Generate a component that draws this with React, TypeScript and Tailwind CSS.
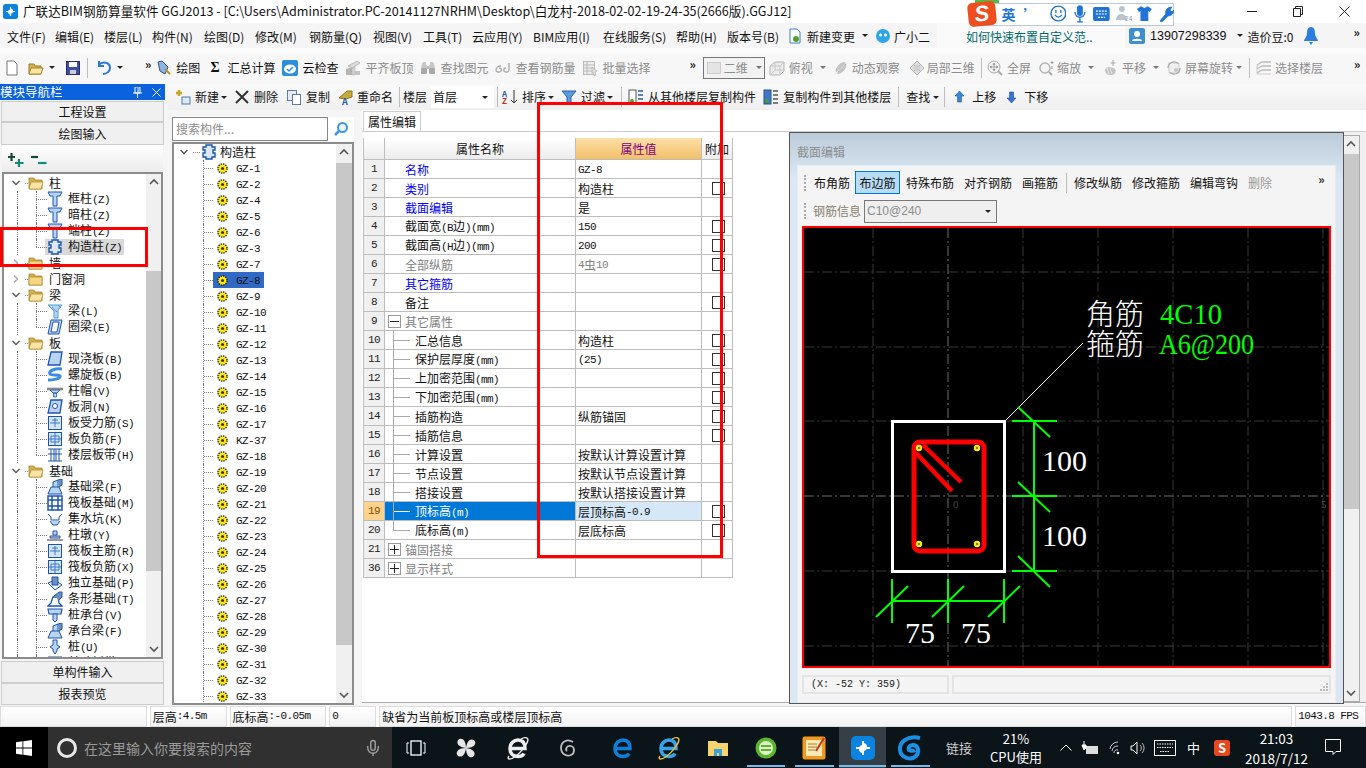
import type { ReactNode } from "react";
import { Mic } from "lucide-react";

const mono = "font-['Liberation_Mono','DejaVu_Sans_Mono',monospace]";

// CJK text at 12px, latin squeezed to 6px per char like the old bitmap font
function Mix({ text }: { text: string }) {
  return (
    <>
      {text.split(/([\x00-\x7f]+)/).map((part, i) =>
        /^[\x00-\x7f]+$/.test(part) ? (
          <span key={i} className={`${mono} text-[11px] tracking-[-0.6px]`}>
            {part}
          </span>
        ) : (
          <span key={i}>{part}</span>
        ),
      )}
    </>
  );
}

function Ico({ children, w = 16, h = 16 }: { children: ReactNode; w?: number; h?: number }) {
  return (
    <svg width={w} height={h} viewBox={`0 0 ${w} ${h}`} className="shrink-0">
      {children}
    </svg>
  );
}

function Caret({ className = "" }: { className?: string }) {
  return (
    <span
      className={`inline-block h-0 w-0 shrink-0 border-x-[3px] border-t-[3px] border-x-transparent border-t-[#222] ${className}`}
    />
  );
}

function Sep({ className = "" }: { className?: string }) {
  return <span className={`h-5 w-px shrink-0 bg-[#bdbdbd] ${className}`} />;
}

function Tool({
  icon,
  label,
  gray,
  gap = "gap-[4px]",
  className = "",
}: {
  icon?: ReactNode;
  label: string;
  gray?: boolean;
  gap?: string;
  className?: string;
}) {
  return (
    <span className={`flex shrink-0 items-center ${gap} ${className}`}>
      {icon}
      <span className={gray ? "text-[#8c8c8c]" : "text-[#111]"}>{label}</span>
    </span>
  );
}

/* disabled toolbar drawings */
const gAlign = (
  <Ico>
    <path d="M1 15V9l6-2v8z" fill="#b5b5b5" />
    <path d="M7 15V6h3v9z" fill="#d2d2d2" stroke="#aaa" strokeWidth="0.5" />
    <path d="M3 6l9-5 3 2-8 5z" fill="#dcdcdc" stroke="#aaa" strokeWidth="0.7" />
    <path d="M10 15v-4h5v4z" fill="#c4c4c4" />
  </Ico>
);
const gBinoc = (
  <Ico>
    <path d="M3 2h3v3h1v3H1l1-4zM10 2h3l1 2 1 4H9V5h1z" fill="#c8c8c8" />
    <rect x="1" y="8" width="6" height="6" rx="1" fill="#a8a8a8" />
    <rect x="9" y="8" width="6" height="6" rx="1" fill="#a8a8a8" />
    <rect x="7" y="6" width="2" height="3" fill="#bbb" />
  </Ico>
);
const gGlasses = (
  <Ico>
    <path d="M6 6C3 6 1 8 1 10c0 2 3 3 5 1 1-1 0-3-2-3" fill="none" stroke="#aaa" strokeWidth="1.3" />
    <path d="M14 3v7c0 2-3 3-5 1-1-1 0-3 2-3" fill="none" stroke="#aaa" strokeWidth="1.3" />
  </Ico>
);
const gList = (
  <Ico>
    <rect x="1.5" y="1.5" width="11" height="13" fill="#eee" stroke="#bbb" />
    <path d="M1 5h12M1 8h12M1 11h12M5 1v14" stroke="#bbb" />
    <path d="M10 7l5 4-2 1 1 3-2 .5-1-3-1 1z" fill="#ddd" stroke="#aaa" strokeWidth="0.6" />
  </Ico>
);
const gCube = (
  <Ico>
    <path d="M1 6l5-4h9v9l-4 4H1z" fill="#ececec" stroke="#b5b5b5" />
    <path d="M1 6h10v9M11 6l4-4M1 15l5-5h9M6 2v8" fill="none" stroke="#c8c8c8" />
  </Ico>
);
const gPlanet = (
  <Ico>
    <ellipse cx="8" cy="8" rx="4" ry="7" transform="rotate(40 8 8)" fill="#c4c4c4" />
    <path d="M1 14c3-1 10-7 14-12" stroke="#eee" strokeWidth="1.5" fill="none" />
    <path d="M5 12c2-1 6-5 8-8" stroke="#a8a8a8" fill="none" />
  </Ico>
);
const gTile = (
  <Ico>
    <path d="M8 1l7 7-7 7-7-7z" fill="#e2e2e2" stroke="#b0b0b0" />
    <path d="M4.500 4.500l7 7M8 1l-3.500 3.500M11.500 4.500L4.500 11.500" stroke="#b0b0b0" />
    <path d="M8 4l4 4-4 4-4-4z" fill="#cfcfcf" />
  </Ico>
);
const gLensFull = (
  <Ico>
    <circle cx="7" cy="7" r="6" fill="#f2f2f2" stroke="#aaa" />
    <path d="M7 3v8M3 7h8M7 3L6 4.500h2zM7 11L6 9.500h2zM3 7l1.500-1v2zM11 7L9.500 6v2z" stroke="#999" strokeWidth="0.8" fill="#999" />
    <path d="M11 11l4 4" stroke="#aaa" strokeWidth="2" />
  </Ico>
);
const gLensZoom = (
  <Ico>
    <circle cx="6" cy="8" r="5" fill="#f5f5f5" stroke="#b5b5b5" strokeWidth="1.5" />
    <path d="M10 12l3 3" stroke="#aaa" strokeWidth="2" />
    <path d="M13 1v3M11.500 2.500h3M13 6v3" stroke="#999" />
  </Ico>
);
const gPan = (
  <Ico>
    <path d="M3 10c0-2 2-3 4-3l5 1c2 1 2 3 1 5-1 2-3 2-5 2-3 0-5-2-5-5z" fill="#c4c4c4" />
    <path d="M5 8l2 6M8 8l2 6" stroke="#e8e8e8" />
    <path d="M11 0v6M8.500 3h5" stroke="#aaa" />
  </Ico>
);
const gRotate = (
  <Ico>
    <rect x="3" y="3" width="10" height="10" fill="#f0f0f0" stroke="#ccc" />
    <path d="M2 8a6 6 0 0 1 10-4.500M14 8a6 6 0 0 1-10 4.500" fill="none" stroke="#aaa" strokeWidth="1.3" />
    <circle cx="10" cy="10" r="2" fill="#c4c4c4" />
  </Ico>
);
const gStack = (
  <Ico>
    <path d="M1 5l5-3h9M1 9l5-3h9M1 13l5-3h9" fill="none" stroke="#bbb" strokeWidth="1.300" />
    <path d="M1 5v9h14" fill="none" stroke="#ccc" />
  </Ico>
);

function Chevron({ open }: { open: boolean }) {
  return (
    <svg width="8" height="8" viewBox="0 0 8 8" className="shrink-0">
      <path
        d={open ? "M0.5 2l3.5 3.5L7.5 2" : "M2 0.5L5.5 4 2 7.5"}
        fill="none"
        stroke={open ? "#555" : "#aaa"}
        strokeWidth="1.4"
      />
    </svg>
  );
}

function Folder({ open }: { open: boolean }) {
  return (
    <Ico>
      <path d="M1 3h5l1 2h7v9H1z" fill="#d9b24c" stroke="#9c7a22" strokeWidth="0.7" />
      {open ? (
        <path d="M3 7h12l-2 7H1z" fill="#fbe6a6" stroke="#a8842c" strokeWidth="0.7" />
      ) : (
        <rect x="1" y="6" width="13" height="8" fill="#f6d67e" stroke="#a8842c" strokeWidth="0.7" />
      )}
    </Ico>
  );
}

type Kind =
  | "col" | "puzzle" | "beam" | "ring" | "slab" | "spiral" | "cap" | "hole" | "bar1" | "bar2"
  | "band" | "fbeam" | "raft" | "pit" | "pier" | "iso" | "strip" | "pilecap" | "pile";

function TreeIcon({ kind }: { kind: Kind }) {
  const b = "#1c54b0";
  const f = "#b9d3f3";
  const m: Record<Kind, ReactNode> = {
    col: <path d="M1 1h14l-2 4h-3v10H6V5H3z" fill={f} stroke={b} />,
    puzzle: (
      <path d="M5 1h6v2h3v3h-2v3h2v4h-3v2H5v-2H2V9h2V6H2V3h3z" fill="#dbe8f8" stroke={b} strokeWidth="1.4" />
    ),
    beam: (
      <>
        <path d="M1 2h14l-4 5v8H7V8z" fill={f} stroke="#4a9bd0" />
        <path d="M5 4l5 5M11 2l3 3" stroke="#4a9bd0" />
      </>
    ),
    ring: <path d="M4 1h11l-3 14H1z M6 3L4 13h6l2-10z" fill={f} fillRule="evenodd" stroke={b} />,
    slab: <path d="M4 1h11l-2 13H1z" fill={f} stroke={b} strokeWidth="1.3" />,
    spiral: <path d="M15 2C8 1 1 4 3 7c2 2 8 0 10 2 1 3-8 4-12 4" fill="none" stroke="#3c8be0" strokeWidth="3" />,
    cap: (
      <>
        <path d="M0 5h16v2H0z" fill="#9a9a9a" stroke="#666" strokeWidth="0.5" />
        <path d="M3 7h10l-3 3H6zM6.5 10h3v4h-3z" fill={f} stroke={b} strokeWidth="0.8" />
      </>
    ),
    hole: (
      <>
        <path d="M4 1h11l-2 13H1z" fill={f} stroke={b} strokeWidth="1.3" />
        <circle cx="8" cy="7" r="2.5" fill="#fff" stroke={b} />
      </>
    ),
    bar1: (
      <>
        <rect x="1.5" y="1.5" width="13" height="13" fill="#d4e4f7" stroke={b} />
        <path d="M3 8h10M8 3v9M5 5h6" stroke="#3c78c8" fill="none" />
      </>
    ),
    bar2: (
      <>
        <rect x="1.5" y="1.5" width="13" height="13" fill="#d4e4f7" stroke={b} />
        <path d="M2 8h12M8 2v12M4 5h8v6H4z" stroke="#3c78c8" fill="none" />
      </>
    ),
    band: <path d="M1 2h14M1 14h14M4 2v12M12 2v12M7 2v12M9 2v12M1 7h14" stroke={b} fill="none" />,
    fbeam: (
      <>
        <path d="M1 15l3-7h8l3 7zM6 8V3l5-2v7" fill={f} stroke={b} />
        <path d="M11 1l4-1v6l-3 2" fill="#6f8fb8" stroke={b} />
      </>
    ),
    raft: (
      <>
        <rect x="1" y="1" width="14" height="14" fill="#fff" stroke={b} strokeWidth="1.5" />
        <path d="M1 5h14M1 11h14M5 1v14M11 1v14" stroke={b} strokeWidth="1.5" />
      </>
    ),
    pit: (
      <>
        <path d="M1 3l3 3v3h8V6l3-3" fill="none" stroke={b} />
        <path d="M3 10l3 4h4l3-4" fill={f} stroke={b} />
      </>
    ),
    pier: (
      <>
        <path d="M6 4h4v4H6z" fill={f} stroke={b} />
        <path d="M3 9h10v2H3z" fill="#ccd" stroke={b} />
        <path d="M0 12h16v2H0z" fill="#9a9a9a" />
      </>
    ),
    iso: (
      <>
        <path d="M1 8l7 7 7-5-7-5z" fill="#eef4fc" stroke={b} />
        <path d="M5 2h6v8H5z" fill="#6f8fb8" stroke={b} />
      </>
    ),
    strip: (
      <>
        <path d="M1 15l3-3 2-6h5l1 6 3 3z" fill="#fff" stroke={b} strokeWidth="1.3" />
        <path d="M7 5l5-4 3 0v5l-3 3" fill="#6f8fb8" stroke={b} />
      </>
    ),
    pilecap: (
      <>
        <path d="M1 2h14l-1 5H2z" fill={f} stroke={b} strokeWidth="1.2" />
        <path d="M6 7h4v6l-2 2-2-2z" fill={f} stroke={b} />
      </>
    ),
    pile: <path d="M6 1h4v5l3 2-3 2v2l-2 3-2-3v-2L3 8l3-2z" fill={f} stroke={b} />,
  };
  return <Ico>{m[kind]}</Ico>;
}

function GearDot() {
  return (
    <svg width="11" height="11" viewBox="0 0 11 11" className="shrink-0">
      <circle cx="5.5" cy="5.5" r="4.6" fill="#ffec00" stroke="#222" strokeWidth="1.4" strokeDasharray="1.4 1" />
      <circle cx="5.5" cy="5.5" r="1.6" fill="#333" />
    </svg>
  );
}

function NavParent({ label, open }: { label: string; open: boolean }) {
  return (
    <div className="flex h-4 items-center pl-[8px]">
      <Chevron open={open} />
      <span className="ml-[5px] w-[3px] border-t border-dotted border-[#888]" />
      <Folder open={open} />
      <span className="ml-[5px]">{label}</span>
    </div>
  );
}

function NavChild({ label, kind, last, active }: { label: string; kind: Kind; last?: boolean; active?: boolean }) {
  return (
    <div className="flex h-4 items-center pl-[13px]">
      <span className="h-4 w-[19px] border-l border-dotted border-[#777]" />
      <span className="relative flex h-4 w-[11px] items-center">
        <span className={`absolute top-0 left-0 border-l border-dotted border-[#777] ${last ? "h-2" : "h-4"}`} />
        <span className="w-[11px] border-t border-dotted border-[#777]" />
      </span>
      <span className={`flex h-4 items-center pr-[2px] ${active ? "-ml-[2px] bg-[#d9d9d9] pl-[2px]" : ""}`}>
        <TreeIcon kind={kind} />
        <span className="ml-[5px] whitespace-nowrap">
          <Mix text={label} />
        </span>
      </span>
    </div>
  );
}

const navTree: { label: string; open: boolean; kids: [string, Kind][] }[] = [
  { label: "柱", open: true, kids: [["框柱(Z)", "col"], ["暗柱(Z)", "col"], ["端柱(Z)", "col"], ["构造柱(Z)", "puzzle"]] },
  { label: "墙", open: false, kids: [] },
  { label: "门窗洞", open: false, kids: [] },
  { label: "梁", open: true, kids: [["梁(L)", "beam"], ["圈梁(E)", "ring"]] },
  {
    label: "板",
    open: true,
    kids: [
      ["现浇板(B)", "slab"], ["螺旋板(B)", "spiral"], ["柱帽(V)", "cap"], ["板洞(N)", "hole"],
      ["板受力筋(S)", "bar1"], ["板负筋(F)", "bar2"], ["楼层板带(H)", "band"],
    ],
  },
  {
    label: "基础",
    open: true,
    kids: [
      ["基础梁(F)", "fbeam"], ["筏板基础(M)", "raft"], ["集水坑(K)", "pit"], ["柱墩(Y)", "pier"],
      ["筏板主筋(R)", "bar1"], ["筏板负筋(X)", "bar2"], ["独立基础(P)", "iso"], ["条形基础(T)", "strip"],
      ["桩承台(V)", "pilecap"], ["承台梁(F)", "fbeam"], ["桩(U)", "pile"], ["基础板带(W)", "band"],
    ],
  },
];

const gzList = [
  "GZ-1", "GZ-2", "GZ-4", "GZ-5", "GZ-6", "GZ-3", "GZ-7", "GZ-8", "GZ-9", "GZ-10", "GZ-11", "GZ-12",
  "GZ-13", "GZ-14", "GZ-15", "GZ-16", "GZ-17", "KZ-37", "GZ-18", "GZ-19", "GZ-20", "GZ-21", "GZ-22",
  "GZ-23", "GZ-24", "GZ-25", "GZ-26", "GZ-27", "GZ-28", "GZ-29", "GZ-30", "GZ-31", "GZ-32", "GZ-33",
];

const menus = [
  ["文件(F)", "w-[48px]"],
  ["编辑(E)", "w-[49px]"],
  ["楼层(L)", "w-[48px]"],
  ["构件(N)", "w-[52px]"],
  ["绘图(D)", "w-[51px]"],
  ["修改(M)", "w-[54px]"],
  ["钢筋量(Q)", "w-[64px]"],
  ["视图(V)", "w-[50px]"],
  ["工具(T)", "w-[49px]"],
  ["云应用(Y)", "w-[61px]"],
  ["BIM应用(I)", "w-[70px]"],
  ["在线服务(S)", "w-[73px]"],
  ["帮助(H)", "w-[51px]"],
  ["版本号(B)", "w-[60px]"],
];

type Row = {
  n: string;
  name: string;
  value?: string;
  tone?: "blue" | "gray";
  check?: boolean;
  child?: boolean;
  group?: "-" | "+";
  sel?: boolean;
};

const rows: Row[] = [
  { n: "1", name: "名称", value: "GZ-8", tone: "blue" },
  { n: "2", name: "类别", value: "构造柱", tone: "blue", check: true },
  { n: "3", name: "截面编辑", value: "是", tone: "blue" },
  { n: "4", name: "截面宽(B边)(mm)", value: "150", check: true },
  { n: "5", name: "截面高(H边)(mm)", value: "200", check: true },
  { n: "6", name: "全部纵筋", value: "4虫10", tone: "gray", check: true },
  { n: "7", name: "其它箍筋", tone: "blue" },
  { n: "8", name: "备注", check: true },
  { n: "9", name: "其它属性", tone: "gray", group: "-" },
  { n: "10", name: "汇总信息", value: "构造柱", check: true, child: true },
  { n: "11", name: "保护层厚度(mm)", value: "(25)", check: true, child: true },
  { n: "12", name: "上加密范围(mm)", check: true, child: true },
  { n: "13", name: "下加密范围(mm)", check: true, child: true },
  { n: "14", name: "插筋构造", value: "纵筋锚固", check: true, child: true },
  { n: "15", name: "插筋信息", check: true, child: true },
  { n: "16", name: "计算设置", value: "按默认计算设置计算", child: true },
  { n: "17", name: "节点设置", value: "按默认节点设置计算", child: true },
  { n: "18", name: "搭接设置", value: "按默认搭接设置计算", child: true },
  { n: "19", name: "顶标高(m)", value: "层顶标高-0.9", check: true, child: true, sel: true },
  { n: "20", name: "底标高(m)", value: "层底标高", check: true, child: true },
  { n: "21", name: "锚固搭接", tone: "gray", group: "+" },
  { n: "36", name: "显示样式", tone: "gray", group: "+" },
];

function PropRow({ r }: { r: Row }) {
  const color = r.sel ? "text-white" : r.tone === "blue" ? "text-[#0000ff]" : r.tone === "gray" ? "text-[#808080]" : "text-[#111]";
  return (
    <div className="flex h-[19px] border-b border-[#bdbdbd]">
      <div
        className={`flex w-[21px] items-center justify-center border-r border-[#bdbdbd] pt-[1px] ${mono} text-[11px] tracking-[-0.6px] ${
          r.sel ? "bg-[#fdd28c] text-[#8a4b00]" : "bg-[#f0f0f0] text-[#222]"
        }`}
      >
        {r.n}
      </div>
      <div className={`flex w-[191px] items-center whitespace-nowrap border-r border-[#bdbdbd] ${color} ${r.sel ? "bg-[#0078d7]" : ""}`}>
        {r.group && (
          <span className="ml-[3px] flex h-[13px] w-[13px] items-center justify-center border border-[#999] bg-white">
            <svg width="9" height="9" viewBox="0 0 9 9">
              <path d={r.group === "-" ? "M0 4.5h9" : "M0 4.5h9M4.5 0v9"} stroke="#222" />
            </svg>
          </span>
        )}
        {r.child && (
          <span className="relative ml-[8px] flex h-[19px] w-[22px] items-center">
            <span className={`absolute top-0 left-0 w-px bg-[#aaa] ${r.n === "20" ? "h-[9px]" : "h-[19px]"}`} />
            <span className={`h-px w-[17px] ${r.sel ? "bg-white" : "bg-[#aaa]"}`} />
          </span>
        )}
        <span className={`pt-[2px] ${r.child ? "" : r.group ? "ml-[4px]" : "ml-[20px]"}`}>
          <Mix text={r.name} />
        </span>
      </div>
      <div
        className={`flex w-[126px] items-center whitespace-nowrap border-r border-[#bdbdbd] pt-[2px] pl-[2px] ${
          r.tone === "gray" ? "text-[#808080]" : "text-[#111]"
        } ${r.sel ? "bg-[#d6e8f8]" : ""}`}
      >
        {r.value && <Mix text={r.value} />}
      </div>
      <div className="flex w-[31px] items-center border-r border-[#bdbdbd] pl-[10px]">
        {r.check && <span className="h-[13px] w-[13px] border border-[#333] bg-white" />}
      </div>
    </div>
  );
}

function ScrollBar({ thumbTop, thumbH, className = "" }: { thumbTop: number; thumbH: number; className?: string }) {
  return (
    <div className={`relative flex flex-col items-center justify-between bg-[#f0f0f0] py-[4px] ${className}`}>
      <svg width="10" height="8" viewBox="0 0 10 8">
        <path d="M1 6l4-4 4 4" fill="none" stroke="#555" strokeWidth="1.6" />
      </svg>
      <div className="absolute inset-x-0 bg-[#c8c8c8]" style={{ top: thumbTop, height: thumbH }} />
      <svg width="10" height="8" viewBox="0 0 10 8">
        <path d="M1 2l4 4 4-4" fill="none" stroke="#555" strokeWidth="1.6" />
      </svg>
    </div>
  );
}

function SectionDrawing() {
  const vs = [873, 948, 1023, 1098, 1173, 1248, 1323];
  const hs = [272, 347, 421, 496, 571, 646];
  const serif = "'Liberation Serif', serif";
  const cjk = "'Noto Sans CJK SC', sans-serif";
  return (
    <svg viewBox="804 228 525 438" width="525" height="438" className="block bg-black">
      {vs.map((x) => (
        <path key={x} d={`M${x} 228V666`} stroke={x === 948 ? "#6e6e6e" : "#383838"} strokeDasharray="10 3 2 3" />
      ))}
      {hs.map((y) => (
        <path key={y} d={`M804 ${y}H1329`} stroke={y === 496 ? "#6e6e6e" : "#383838"} strokeDasharray="10 3 2 3" />
      ))}
      <path d="M1005 421L1083 343" stroke="#fff" />
      <rect x="892.5" y="421.5" width="112" height="150" fill="none" stroke="#fff" strokeWidth="3" />
      <rect x="914" y="442" width="70" height="109" rx="6" fill="none" stroke="#f00" strokeWidth="5" />
      <path d="M923 445L961 482M916 453L952 491" stroke="#f00" strokeWidth="4.5" />
      {[
        [919, 448],
        [977, 448],
        [919, 544],
        [977, 544],
      ].map(([x, y]) => (
        <g key={`${x}-${y}`}>
          <circle cx={x} cy={y} r="3.2" fill="#ffec00" />
          <circle cx={x} cy={y} r="1.1" fill="#553" />
        </g>
      ))}
      <text x="953" y="508" fontSize="11" fill="#444" fontFamily={serif}>0</text>
      <text x="1321" y="508" fontSize="11" fill="#555" fontFamily={serif}>5</text>
      <g stroke="#00ff00" strokeWidth="2" fill="none">
        <path d="M1034 421V571M1012 421H1057M1012 496H1057M1012 571H1057" />
        <path d="M1018 407L1050 437M1018 482L1050 512M1018 556L1050 587" />
        <path d="M892 601H1004M892 579V623M948 579V623M1004 579V623" />
        <path d="M876 617L908 586M932 617L964 586M988 617L1020 586" />
      </g>
      <g fill="#fff" fontFamily={serif} fontSize="30">
        <text x="1042" y="471">100</text>
        <text x="1042" y="546">100</text>
        <text x="905" y="643">75</text>
        <text x="961" y="643">75</text>
      </g>
      <g fill="#fff" fontFamily={cjk} fontSize="29" fontWeight="300">
        <text x="1086" y="325">角筋</text>
        <text x="1086" y="355">箍筋</text>
      </g>
      <g fill="#00ff00" fontFamily={serif} fontSize="30">
        <text x="1160" y="324" textLength="62" lengthAdjust="spacingAndGlyphs">4C10</text>
        <text x="1159" y="354" textLength="95" lengthAdjust="spacingAndGlyphs">A6@200</text>
      </g>
    </svg>
  );
}

function Grip() {
  return <span className="h-[16px] w-[2px] shrink-0 border-l-2 border-dotted border-[#aaa]" />;
}

function SectionDialog() {
  return (
    <div className="absolute top-[132px] left-[789px] z-10 flex h-[572px] w-[555px] flex-col border border-[#555] bg-gradient-to-b from-[#bccbda] to-[#dce7f3] to-[8%] px-[7px]">
      <div className="flex h-[32px] shrink-0 items-center pt-[5px] text-[#8c8c8c]">截面编辑</div>
      <div className="flex min-h-0 flex-1 flex-col border border-[#e8edf3] bg-[#f4f4f4] px-[4px] pb-[8px]">
        <div className="flex h-[30px] shrink-0 items-center pt-[3px] pl-[2px]">
          <Grip />
          <span className="ml-[8px]">布角筋</span>
          <span className="ml-[5px] flex h-[23px] w-[45px] items-center justify-center border border-[#0078d7] bg-[#b9dcf6]">布边筋</span>
          <span className="ml-[6px]">特殊布筋</span>
          <span className="ml-[10px]">对齐钢筋</span>
          <span className="ml-[10px]">画箍筋</span>
          <Sep className="ml-[8px]" />
          <span className="ml-[7px]">修改纵筋</span>
          <span className="ml-[10px]">修改箍筋</span>
          <span className="ml-[10px]">编辑弯钩</span>
          <span className="ml-[10px] text-[#999]">删除</span>
          <span className="ml-[46px] -mt-[8px] font-bold text-[#222]">»</span>
        </div>
        <div className="flex h-[30px] shrink-0 items-center pl-[2px]">
          <Grip />
          <span className="ml-[7px] text-[#8a7f70]">钢筋信息</span>
          <span className="ml-[3px] flex h-[23px] w-[133px] items-center justify-between border border-[#777] bg-[#efefef] pr-[5px] pl-[2px] text-[#8c8c8c]">
            <span className="font-['Liberation_Sans',sans-serif]">C10@240</span>
            <Caret />
          </span>
        </div>
        <div className="shrink-0 border-2 border-[#f00] bg-black">
          <SectionDrawing />
        </div>
        <div className="mt-[7px] flex h-[19px] shrink-0">
          <div className={`flex w-[147px] items-center border-2 border-[#e4e4e4] pl-[7px] ${mono} text-[10px] text-[#222]`}>(X: -52 Y: 359)</div>
          <div className="ml-[3px] flex flex-1 items-end justify-end border-2 border-[#e4e4e4] pr-[1px] pb-[1px]">
            <svg width="8" height="8" viewBox="0 0 8 8">
              <path d="M6 0h2v2H6zM3 3h2v2H3zM6 3h2v2H6zM0 6h2v2H0zM3 6h2v2H3zM6 6h2v2H6z" fill="#bbb" />
            </svg>
          </div>
        </div>
      </div>
    </div>
  );
}

function ELogo({ color, ring }: { color: string; ring?: string }) {
  return (
    <svg width="22" height="24" viewBox="0 0 22 24" className="block">
      <path d="M4 12.500h14c0-6-3-8.500-7-8.500s-8 3-8 8.500 4 8 8 8c3 0 5-1 6-3" fill="none" stroke={color} strokeWidth="3.500" />
      {ring && <path d="M2 20C-1 24 4 24 9 20s11-11 12-16c0-3-4-3-7-1" fill="none" stroke={ring} strokeWidth="1.300" />}
    </svg>
  );
}

function TaskIcons() {
  return (
    <>
      <span className="ml-[14px] flex w-[20px] justify-center">
        <svg width="20" height="16" viewBox="0 0 20 16">
          <rect x="5" y="1" width="10" height="14" fill="none" stroke="#fff" strokeWidth="1.3" />
          <path d="M3 3H1v10h2M17 3h2v10h-2" fill="none" stroke="#fff" />
        </svg>
      </span>
      <span className="ml-[29px]">
        <svg width="22" height="22" viewBox="0 0 22 22" className="block">
          <path d="M11 11C4 10 1 7 3 3c3-3 8-1 8 8zM11 11c1-7 4-10 8-8 3 3 1 8-8 8zM11 11c7 1 10 4 8 8-3 3-8 1-8-8zM11 11c-1 7-4 10-8 8-3-3-1-8 8-8z" fill="#e6e6e6" />
        </svg>
      </span>
      <span className="ml-[30px] w-[21px]">
        <ELogo color="#eeeeee" ring="#eeeeee" />
      </span>
      <span className="ml-[30px] w-[20px]">
        <svg width="20" height="20" viewBox="0 0 20 20" className="block">
          <path d="M15 4C9 0 3 4 3 10s6 9 10 7 4-8 0-9-6 3-4 5" fill="none" stroke="#bbb" strokeWidth="1.8" />
        </svg>
      </span>
      <span className="ml-[34px] w-[21px]">
        <ELogo color="#0a7fdc" />
      </span>
      <span className="ml-[25px] w-[24px]">
        <ELogo color="#36a4ea" ring="#f2c230" />
      </span>
      <span className="ml-[25px] w-[22px]">
        <svg width="22" height="22" viewBox="0 0 22 22" className="block">
          <path d="M1 4h8l2 2h10v13H1z" fill="#f5d46e" />
          <path d="M7 12h8v7h-3v-3h-2v3H7z" fill="#3aa0dc" />
        </svg>
      </span>
      <span className="ml-[26px] w-[22px]">
        <svg width="22" height="24" viewBox="0 0 22 24" className="block">
          <circle cx="11" cy="12" r="10.500" fill="#5cb531" />
          <circle cx="11" cy="12" r="7" fill="#dff2c6" />
          <path d="M6 10h10M6 14h10" stroke="#5cb531" strokeWidth="2" />
        </svg>
      </span>
      <span className="ml-[25px] w-[24px]">
        <svg width="24" height="24" viewBox="0 0 24 24" className="block">
          <rect x="0.5" y="0.5" width="23" height="23" rx="2" fill="#f09a22" />
          <rect x="4" y="4" width="16" height="16" fill="#fbe9b5" />
          <path d="M6 8h9M6 11h9M6 14h7" stroke="#a87a2a" />
          <path d="M14 15L22 2" stroke="#c4361a" strokeWidth="2" />
        </svg>
      </span>
      <span className="ml-[13px] flex h-[41px] w-[47px] items-center justify-center bg-[#353f45]">
        <svg width="24" height="24" viewBox="0 0 24 24">
          <rect width="24" height="24" rx="5" fill="#0a84e0" />
          <path d="M12 5v14M5 12h14M12 8a3 3 0 1 1-3 3M12 16a3 3 0 1 1 3-3" fill="none" stroke="#fff" strokeWidth="2" />
        </svg>
      </span>
      <span className="ml-[12px] w-[24px]">
        <svg width="24" height="26" viewBox="0 0 24 26" className="block">
          <path d="M22 3C10 0 1 7 2 15c1 8 11 11 16 6 4-4 2-11-3-11-3 0-5 2-4 5 3 1 5 1 6 0" fill="none" stroke="#1a8fe6" strokeWidth="4" />
        </svg>
      </span>
    </>
  );
}

function Tray() {
  return (
    <>
      <span className="ml-[24px] w-[26px] text-[13px] text-[#cfcfcf]">链接</span>
      <span className="ml-[20px] flex w-[48px] flex-col items-center text-[13px] leading-[18px] text-white">
        <span>21%</span>
        <span>CPU使用</span>
      </span>
      <svg width="12" height="7" viewBox="0 0 12 7" className="ml-[20px]">
        <path d="M0.5 6.500L6 1l5.500 5.500" fill="none" stroke="#fff" />
      </svg>
      <svg width="17" height="14" viewBox="0 0 17 14" className="ml-[9px]">
        <rect x="5" y="5" width="12" height="8" fill="#ddd" />
        <path d="M3 0v4M1 4h4v3L3 9z" stroke="#fff" fill="#fff" />
      </svg>
      <svg width="14" height="14" viewBox="0 0 14 14" className="ml-[11px]">
        <path d="M1 8a8 8 0 0 1 8-7M3 10a6 6 0 0 1 6-5M5 12a3 3 0 0 1 4-3" fill="none" stroke="#ccc" />
        <circle cx="9" cy="12" r="1.300" fill="#fff" />
      </svg>
      <svg width="16" height="14" viewBox="0 0 16 14" className="ml-[7px]">
        <path d="M1 5h2l4-4v12l-4-4H1z" fill="none" stroke="#fff" />
        <path d="M10 4a4 4 0 0 1 0 6M12 2a7 7 0 0 1 0 10" fill="none" stroke="#bbb" />
      </svg>
      <svg width="22" height="16" viewBox="0 0 22 16" className="ml-[8px]">
        <rect x="0.5" y="0.5" width="21" height="15" fill="none" stroke="#fff" />
        <path d="M3 4h16M3 7.500h16M6 11.500h10" stroke="#fff" strokeDasharray="1.5 1" />
      </svg>
      <span className="ml-[11px] w-[13px] text-[13px] text-white">中</span>
      <span className="ml-[14px] flex h-[16px] w-[16px] items-center justify-center rounded-[3px] bg-[#e8461c] text-[13px] leading-none font-bold text-white">S</span>
      <span className="ml-[17px] flex w-[59px] flex-col items-center text-[13.500px] leading-[20px] text-white">
        <span>21:03</span>
        <span>2018/7/12</span>
      </span>
      <svg width="16" height="17" viewBox="0 0 16 17" className="ml-[19px]">
        <path d="M0.5 0.5h15v12h-4.500l-3 3v-3h-7.500z" fill="none" stroke="#fff" />
      </svg>
    </>
  );
}

function SogouBar() {
  const blue = "#1f74d6";
  return (
    <div className="absolute top-0 left-[968px] z-20 flex h-[27px] w-[206px] items-center">
      <span className="absolute top-0 left-[7px] h-[3px] w-[24px] bg-[#57b848]" />
      <span className="absolute top-[3px] right-0 left-[6px] h-[23px] border border-[#b9c9d9] bg-white" />
      <span className="relative flex h-[24px] w-[28px] -rotate-6 items-center justify-center rounded-[5px] bg-[#ee4d1f] text-[22px] leading-none font-bold text-white italic font-['Liberation_Sans',sans-serif]">S</span>
      <span className="relative ml-[6px] text-[14px] leading-none font-bold text-[#1f74d6]">英</span>
      <span className="relative ml-[8px] text-[14px] font-bold text-[#1f74d6]">’</span>
      <svg width="17" height="17" viewBox="0 0 17 17" className="relative ml-[12px]">
        <circle cx="8.500" cy="8.500" r="7.500" fill="none" stroke={blue} strokeWidth="1.500" />
        <path d="M6 5v3M11 5v3M5 10c2 3 5 3 7 0" fill="none" stroke={blue} strokeWidth="1.300" />
      </svg>
      <svg width="12" height="18" viewBox="0 0 12 18" className="relative ml-[8px]">
        <rect x="3" y="0" width="6" height="11" rx="3" fill={blue} />
        <path d="M1 7c0 7 10 7 10 0M6 13v4M3 17h6" fill="none" stroke={blue} strokeWidth="1.400" />
      </svg>
      <svg width="17" height="14" viewBox="0 0 17 14" className="relative ml-[7px]">
        <rect width="17" height="14" rx="2" fill={blue} />
        <path d="M3 4h11M3 7h11M5 10.500h7" stroke="#fff" strokeWidth="1.200" strokeDasharray="2 1" />
      </svg>
      <svg width="17" height="17" viewBox="0 0 17 17" className="relative ml-[6px]">
        <circle cx="6" cy="4" r="3" fill="#b9c4cf" />
        <path d="M0 15c0-8 11-8 11 0z" fill="#b9c4cf" />
        <text x="9" y="16" fontSize="7" fill="#8fa0b0">24</text>
      </svg>
      <svg width="15" height="15" viewBox="0 0 15 15" className="relative ml-[5px]">
        <path d="M4 0l3.500 2L11 0l4 3-2 3-1.500-1v10h-8V5L2 6 0 3z" fill={blue} />
      </svg>
      <svg width="15" height="16" viewBox="0 0 15 16" className="relative ml-[7px]">
        <path d="M1 15l6-7c-1-4 2-7 6-7l-2 3 2 2 2-2c0 4-3 6-6 6l-6 6z" fill={blue} stroke={blue} />
      </svg>
    </div>
  );
}

export default function App() {
  return (
    <div className="relative flex h-[768px] w-[1366px] flex-col overflow-hidden bg-white font-['Noto_Sans_CJK_SC','Liberation_Sans',sans-serif] text-[12px] leading-none text-[#111]">
      {/* title bar */}
      <div className="flex h-[23px] shrink-0 items-center whitespace-nowrap bg-white pl-[3px]">
        <svg width="15" height="15" viewBox="0 0 15 15" className="shrink-0">
          <rect width="15" height="15" rx="2.500" fill="#0a84e0" />
          <path d="M7.500 3v9M3 7.500h9M7.500 5a2 2 0 1 1-2 2M7.500 10a2 2 0 1 1 2-2" fill="none" stroke="#fff" strokeWidth="1.200" />
        </svg>
        <span className="ml-[5px] w-[775px] text-[12.600px] text-[#111]">
          广联达BIM钢筋算量软件 GGJ2013 - [C:\Users\Administrator.PC-20141127NRHM\Desktop\白龙村-2018-02-02-19-24-35(2666版).GGJ12]
        </span>
        <svg width="11" height="11" viewBox="0 0 11 11" className="ml-[449px]">
          <path d="M0 5.500h10" stroke="#222" />
        </svg>
        <svg width="10" height="11" viewBox="0 0 10 11" className="ml-[35px]">
          <path d="M0.5 2.500h7v8h-7zM2.500 2.500v-2h7v8h-2" fill="none" stroke="#222" />
        </svg>
        <svg width="11" height="11" viewBox="0 0 11 11" className="ml-[36px]">
          <path d="M0.5 0.5l10 10M10.500 0.5l-10 10" stroke="#222" />
        </svg>
      </div>

      {/* menu bar */}
      <div className="flex h-[25px] shrink-0 items-center whitespace-nowrap bg-[#f5f5f5] pl-[7px]">
        {menus.map(([m, w]) => (
          <span key={m} className={`pt-[2px] ${w}`}>
            {m}
          </span>
        ))}
        <Ico>
          <path d="M3 1h7l3 3v11H3z" fill="#fff" stroke="#3a7ec8" />
          <circle cx="9" cy="11" r="3" fill="#5aa02c" />
        </Ico>
        <span className="ml-[4px] pt-[2px]">新建变更</span>
        <Caret className="ml-[7px]" />
        <span className="ml-[7px]">
          <Ico>
            <circle cx="8" cy="8" r="7" fill="#2ba6ea" />
            <circle cx="5.500" cy="7" r="1.500" fill="#fff" />
            <circle cx="10.500" cy="7" r="1.500" fill="#fff" />
          </Ico>
        </span>
        <span className="ml-[3px] pt-[2px]">广小二</span>
        <span className="ml-[7px] flex h-[25px] w-[188px] items-center bg-[#fafafa] pt-[2px] pl-[29px] text-[#006a6a]">如何快速布置自定义范..</span>
        <span className="ml-[4px]">
          <Ico>
            <rect width="16" height="16" rx="2" fill="#3f8fce" />
            <circle cx="8" cy="6" r="3" fill="#fff" />
            <path d="M3 13h10c0-3-10-3-10 0z" fill="#fff" />
          </Ico>
        </span>
        <span className="ml-[5px] pt-[2px] text-[12.500px] font-['Liberation_Sans',sans-serif]">13907298339</span>
        <Caret className="ml-[10px]" />
        <span className="ml-[5px] pt-[2px]">造价豆:0</span>
        <span className="ml-[10px]">
          <svg width="14" height="18" viewBox="0 0 14 18" className="block">
            <path d="M7 0c3 0 4 3 4 6 0 4 3 6 3 8H0c0-2 3-4 3-8 0-3 1-6 4-6zM5 15h4l-2 3z" fill="#2a7ee0" />
          </svg>
        </span>
        <span className="ml-[36px] -mt-[8px] font-bold">»</span>
      </div>
      <div className="h-[6px] shrink-0 bg-[#fbfbfb]" />

      {/* main toolbar */}
      <div className="flex h-[30px] shrink-0 items-center whitespace-nowrap bg-[#f7f7f7] pb-[3px] pl-[4px]">
        <Ico>
          <path d="M3 1h7l3 3v11H3z" fill="#fff" stroke="#777" />
        </Ico>
        <span className="ml-[8px]">
          <Ico>
            <path d="M1 4h5l1 2h6v8H1z" fill="#d9b24c" stroke="#9c7a22" />
            <path d="M3 8h12l-2 6H1z" fill="#fbe6a6" stroke="#a8842c" />
          </Ico>
        </span>
        <Caret className="ml-[5px]" />
        <span className="ml-[10px]">
          <Ico>
            <rect x="1.500" y="1.500" width="13" height="13" fill="#3d4fa0" stroke="#27306a" />
            <rect x="4" y="2" width="8" height="5" fill="#fff" />
            <rect x="5" y="10" width="6" height="4" fill="#ccd" />
          </Ico>
        </span>
        <Sep className="ml-[6px]" />
        <span className="ml-[8px]">
          <Ico>
            <path d="M3 5c3-4 11-3 11 3 0 3-3 6-7 6M3 1v5h5" fill="none" stroke="#2f78d0" strokeWidth="2" />
          </Ico>
        </span>
        <Caret className="ml-[5px]" />
        <span className="ml-[22px] -mt-[8px] font-bold">»</span>
        <Tool
          className="ml-[5px]"
          label="绘图"
          icon={
            <Ico>
              <path d="M2 2l4-1 6 6-3 7-5-3z" fill="#8fb4e3" stroke="#2b4f8a" />
              <path d="M9 9l5 5" stroke="#b9912c" strokeWidth="2" />
            </Ico>
          }
        />
        <Tool
          className="ml-[10px]"
          gap="gap-[6px]"
          label="汇总计算"
          icon={<span className="w-[11px] text-[14px] leading-none font-bold font-['Liberation_Serif',serif]">Σ</span>}
        />
        <Tool
          className="ml-[7px]"
          label="云检查"
          icon={
            <Ico>
              <rect width="16" height="16" rx="2" fill="#2a8fdc" />
              <ellipse cx="8" cy="9" rx="6" ry="4.500" fill="#fff" />
              <path d="M5 9l2 2 4-4" fill="none" stroke="#2a8fdc" strokeWidth="1.500" />
            </Ico>
          }
        />
        <Tool className="ml-[7px]" gray label="平齐板顶" icon={gAlign} />
        <Tool className="ml-[7px]" gray label="查找图元" icon={gBinoc} />
        <Tool className="ml-[7px]" gray label="查看钢筋量" icon={gGlasses} />
        <Tool className="ml-[7px]" gray label="批量选择" icon={gList} />
        <span className="ml-[39px] -mt-[8px] font-bold">»</span>
        <span className="ml-[7px] flex h-[22px] w-[62px] items-center border border-[#777] bg-[#f2f2f2] pl-[3px] text-[#8c8c8c]">
          <span className="h-[12px] w-[14px] border border-[#ccc] bg-[#e4e4e4]" />
          <span className="ml-[3px]">二维</span>
          <Caret className="ml-[8px] border-t-[#777]" />
        </span>
        <Tool className="ml-[4px]" gray label="俯视" icon={gCube} />
        <Caret className="ml-[7px] border-t-[#777]" />
        <Tool className="ml-[7px]" gray gap="gap-[3px]" label="动态观察" icon={gPlanet} />
        <Tool className="ml-[9px]" gray gap="gap-[2px]" label="局部三维" icon={gTile} />
        <Sep className="ml-[6px]" />
        <Tool className="ml-[5px]" gray label="全屏" icon={gLensFull} />
        <Tool className="ml-[8px]" gray gap="gap-[2px]" label="缩放" icon={gLensZoom} />
        <Caret className="ml-[7px] border-t-[#777]" />
        <Tool className="ml-[8px]" gray label="平移" icon={gPan} />
        <Caret className="ml-[7px] border-t-[#777]" />
        <Tool className="ml-[7px]" gray gap="gap-[3px]" label="屏幕旋转" icon={gRotate} />
        <Caret className="ml-[3px] border-t-[#777]" />
        <Sep className="ml-[7px]" />
        <Tool className="ml-[6px]" gray gap="gap-[3px]" label="选择楼层" icon={gStack} />
        <span className="ml-[31px] -mt-[8px] font-bold">»</span>
      </div>

      {/* workspace */}
      <div className="flex min-h-0 flex-1">
        {/* module nav */}
        <div className="flex w-[165px] shrink-0 flex-col bg-[#f5f5f5]">
          <div className="flex h-[16px] shrink-0 items-center justify-between bg-[#0a63dc] pr-[4px] text-[12.500px] text-white">
            <span>模块导航栏</span>
            <span className="flex items-center gap-[10px]">
              <svg width="9" height="11" viewBox="0 0 9 11">
                <path d="M2 0h5v6H2zM0 6h9M4.500 6v5M5 1v5" fill="none" stroke="#fff" />
              </svg>
              <svg width="9" height="9" viewBox="0 0 9 9">
                <path d="M0.5 0.5l8 8M8.500 0.5l-8 8" stroke="#fff" />
              </svg>
            </span>
          </div>
          <div className="mx-px mt-px flex h-[21px] shrink-0 items-center justify-center border border-[#ccc] bg-[#f0f0f0]">工程设置</div>
          <div className="mx-px flex h-[23px] shrink-0 items-center justify-center border border-[#ccc] bg-[#f0f0f0]">绘图输入</div>
          <div className="mx-[2px] flex h-[27px] shrink-0 items-center gap-[6px] bg-gradient-to-b from-white to-[#ececec] pt-[2px] pl-[5px]">
            <svg width="17" height="16" viewBox="0 0 17 16">
              <path d="M4.500 1v8M1 5h7" stroke="#124a3a" strokeWidth="2.200" />
              <path d="M12 7v8M8 11h8.500" stroke="#0f8a78" strokeWidth="2.200" />
            </svg>
            <svg width="17" height="16" viewBox="0 0 17 16">
              <path d="M1 5h7" stroke="#124a3a" strokeWidth="2.200" />
              <path d="M8 11h8.500" stroke="#0f8a78" strokeWidth="2.200" />
            </svg>
          </div>
          <div className="mx-[2px] flex min-h-0 flex-1 border-2 border-[#8c8c8c] bg-white">
            <div className="min-w-0 flex-1 overflow-hidden pt-[1px]">
              {navTree.map((p) => (
                <div key={p.label}>
                  <NavParent label={p.label} open={p.open} />
                  {p.kids.map(([label, kind], i) => (
                    <NavChild
                      key={label}
                      label={label}
                      kind={kind}
                      last={i === p.kids.length - 1}
                      active={label === "构造柱(Z)"}
                    />
                  ))}
                </div>
              ))}
            </div>
            <ScrollBar className="w-[15px] shrink-0" thumbTop={97} thumbH={300} />
          </div>
          <div className="mx-px mt-[2px] flex h-[22px] shrink-0 items-center justify-center border border-[#ccc] bg-[#f0f0f0]">单构件输入</div>
          <div className="mx-px mb-px flex h-[22px] shrink-0 items-center justify-center border border-[#ccc] bg-[#f0f0f0]">报表预览</div>
        </div>

        <div className="flex min-w-0 flex-1 flex-col bg-[#f5f5f5]">
          {/* component toolbar */}
          <div className="ml-[3px] flex h-[26px] shrink-0 items-center whitespace-nowrap bg-gradient-to-b from-[#fafafa] to-[#efefef] pl-[7px]">
            <Tool
              label="新建"
              icon={
                <Ico>
                  <path d="M4 1v6M1 4h6" stroke="#c8a51e" strokeWidth="2.500" />
                  <rect x="7" y="8" width="8" height="7" fill="#dfe9f5" stroke="#4a78b0" />
                </Ico>
              }
            />
            <Caret className="ml-[2px]" />
            <Tool
              className="ml-[7px]"
              label="删除"
              icon={
                <Ico>
                  <path d="M2 2l12 12M14 2L2 14" stroke="#333" strokeWidth="2" />
                </Ico>
              }
            />
            <Tool
              className="ml-[8px]"
              label="复制"
              icon={
                <Ico>
                  <rect x="1.500" y="1.500" width="9" height="10" fill="#e7eef8" stroke="#5a7da8" />
                  <rect x="6.500" y="5.500" width="8" height="10" fill="#fff" stroke="#5a7da8" />
                </Ico>
              }
            />
            <Tool
              className="ml-[7px]"
              label="重命名"
              icon={
                <Ico>
                  <path d="M2 9l8-7h5v6l-6 2z" fill="#c9a83c" stroke="#8f7420" />
                  <text x="5" y="16" fontSize="9" fontWeight="bold" fill="#2a5fa8">A</text>
                </Ico>
              }
            />
            <Sep className="ml-[6px]" />
            <span className="ml-[3px]">楼层</span>
            <span className="ml-[4px] flex h-[22px] w-[63px] items-center justify-between bg-white pr-[6px] pl-[2px]">
              首层
              <Caret />
            </span>
            <Sep className="ml-[3px]" />
            <Tool
              className="ml-[4px]"
              label="排序"
              icon={
                <Ico>
                  <text x="0" y="8" fontSize="8" fontWeight="bold" fill="#2a5fa8">A</text>
                  <text x="0" y="15" fontSize="8" fontWeight="bold" fill="#b03020">Z</text>
                  <path d="M12 1v13M9 11l3 3 3-3" fill="none" stroke="#333" />
                </Ico>
              }
            />
            <Caret className="ml-[2px]" />
            <Tool
              className="ml-[7px]"
              label="过滤"
              icon={
                <Ico>
                  <path d="M1 2h14L10 8v7l-4-2V8z" fill="#5b9be0" stroke="#2a5fa8" />
                </Ico>
              }
            />
            <Caret className="ml-[2px]" />
            <Sep className="ml-[8px]" />
            <Tool
              className="ml-[6px]"
              label="从其他楼层复制构件"
              icon={
                <Ico>
                  <rect x="1" y="1" width="7" height="14" fill="#fff" stroke="#555" />
                  <path d="M10 2h5M10 6h5M10 10h5M10 14h5" stroke="#2a5fa8" strokeWidth="1.500" />
                  <circle cx="4" cy="12" r="2" fill="#4a9c2a" />
                </Ico>
              }
            />
            <Tool
              className="ml-[7px]"
              label="复制构件到其他楼层"
              icon={
                <Ico>
                  <rect x="1" y="1" width="7" height="14" fill="#3f78c8" stroke="#27508f" />
                  <path d="M10 2h5M10 6h5M10 10h5M10 14h5" stroke="#555" strokeWidth="1.500" />
                  <circle cx="4" cy="12" r="2" fill="#4a9c2a" />
                </Ico>
              }
            />
            <Sep className="ml-[7px]" />
            <span className="ml-[7px]">查找</span>
            <Caret className="ml-[3px]" />
            <Sep className="ml-[5px]" />
            <Tool
              className="ml-[9px]"
              gap="gap-[7px]"
              label="上移"
              icon={
                <Ico w={11}>
                  <path d="M5.500 2L10 7H7.500v6h-4V7H1z" fill="#3a86d8" stroke="#1f5da8" strokeWidth="0.600" />
                </Ico>
              }
            />
            <Tool
              className="ml-[10px]"
              gap="gap-[7px]"
              label="下移"
              icon={
                <Ico w={11}>
                  <path d="M5.500 14L10 9H7.500V3h-4v6H1z" fill="#3a6fd0" stroke="#1f4da8" strokeWidth="0.600" />
                </Ico>
              }
            />
          </div>

          <div className="flex min-h-0 flex-1 pl-[7px]">
            {/* component list */}
            <div className="flex w-[182px] shrink-0 flex-col">
              <div className="mt-[7px] flex h-[24px] shrink-0 items-center bg-white">
                <span className="flex h-[24px] w-[156px] items-center border border-[#888] bg-white pl-[3px] text-[#8c8c8c]">搜索构件...</span>
                <svg width="16" height="16" viewBox="0 0 16 16" className="ml-[5px]">
                  <circle cx="9.500" cy="6.500" r="4.500" fill="#e8f3fc" stroke="#3f96e0" strokeWidth="2" />
                  <path d="M6 10l-4 4" stroke="#3f96e0" strokeWidth="2.500" />
                </svg>
              </div>
              <div className="mt-px mb-[1px] flex min-h-0 flex-1 border-2 border-[#8c8c8c] bg-white">
                <div className="min-w-0 flex-1 overflow-hidden">
                  <div className="flex h-4 items-center pl-[6px]">
                    <Chevron open />
                    <span className="ml-[5px] w-[7px] border-t border-dotted border-[#888]" />
                    <span className="ml-[1px]">
                      <TreeIcon kind="puzzle" />
                    </span>
                    <span className="ml-[3px]">构造柱</span>
                  </div>
                  {gzList.map((g) => (
                    <div key={g} className="flex h-4 items-center whitespace-nowrap pl-[29px]">
                      <span className="h-4 self-start border-l border-dotted border-[#777]" />
                      <span className="w-[9px] border-t border-dotted border-[#777]" />
                      <span className={`flex h-4 w-[51px] items-center ${g === "GZ-8" ? "bg-[#316ac5]" : ""}`}>
                        <span className="ml-[4px]">
                          <GearDot />
                        </span>
                        <span className="ml-[8px]">
                          <Mix text={g} />
                        </span>
                      </span>
                    </div>
                  ))}
                </div>
                <ScrollBar className="w-[16px] shrink-0" thumbTop={19} thumbH={482} />
              </div>
            </div>

            {/* property panel */}
            <div className="ml-[8px] flex min-w-0 flex-1 flex-col bg-white pt-[2px]">
              <div className="flex h-[20px] shrink-0 items-end border-b border-[#ccc] pl-[1px]">
                <span className="flex h-[20px] w-[58px] items-center justify-center border-x border-t border-[#ccc] bg-white">属性编辑</span>
              </div>
              <div className="flex min-h-0 flex-1 border-b border-[#aaa]">
                <div className="min-w-0 flex-1 pt-[6px] pl-px">
                  <div className="w-[370px] border-l border-[#bdbdbd]">
                    <div className="flex h-[22px] border-b border-[#bdbdbd]">
                      <div className="w-[21px] border-r border-[#bdbdbd] bg-gradient-to-b from-white to-[#ececec]" />
                      <div className="flex w-[191px] items-center justify-center border-r border-[#bdbdbd] bg-gradient-to-b from-white to-[#ececec]">属性名称</div>
                      <div className="flex w-[126px] items-center justify-center border-r border-[#bdbdbd] bg-gradient-to-b from-[#fbe0a8] to-[#f2c066] text-[#800080]">属性值</div>
                      <div className="flex w-[31px] items-center justify-center border-r border-[#bdbdbd] bg-gradient-to-b from-white to-[#ececec]">附加</div>
                    </div>
                    {rows.map((r) => (
                      <PropRow key={r.n} r={r} />
                    ))}
                  </div>
                </div>
                <div className="flex w-[23px] shrink-0 flex-col bg-[#f0f0f0] pt-[3px] pr-[6px]">
                  <ScrollBar className="flex-1 border-y border-r border-[#aaa]" thumbTop={18} thumbH={355} />
                </div>
              </div>
              <div className="h-[3px] shrink-0 bg-[#f5f5f5]" />
            </div>
          </div>
        </div>
      </div>

      {/* status bar */}
      <div className="flex h-[21px] shrink-0 gap-[3px] whitespace-nowrap bg-white">
        {[
          ["w-[147px]", ""],
          ["w-[77px]", "层高:4.5m"],
          ["w-[97px]", "底标高:-0.05m"],
          ["w-[47px]", "0"],
          ["w-[915px]", "缺省为当前板顶标高或楼层顶标高"],
          ["w-[71px]", "1043.8 FPS"],
        ].map(([w, t], i) => (
          <div key={i} className={`flex items-center border border-[#ddd] bg-gradient-to-b from-white to-[#f2f2f2] pl-[2px] ${w}`}>
            <Mix text={t} />
          </div>
        ))}
      </div>

      {/* windows taskbar */}
      <div className="flex h-[41px] shrink-0 items-center whitespace-nowrap bg-[#0b1418]">
        <div className="flex h-[41px] w-[48px] items-center justify-center bg-black">
          <svg width="16" height="16" viewBox="0 0 16 16">
            <path d="M0 2.200l6.500-.9v6.300H0zM7.300 1.200L16 0v7.600H7.300zM0 8.400h6.500v6.300L0 13.800zM7.300 8.400H16V16l-8.700-1.200z" fill="#fff" />
          </svg>
        </div>
        <div className="flex h-[41px] w-[344px] items-center bg-[#303030] pl-[9px] text-[14px] text-[#9a9a9a]">
          <span className="h-[20px] w-[20px] rounded-full border-[3px] border-[#e8e8e8]" />
          <span className="ml-[7px] flex-1">在这里输入你要搜索的内容</span>
          <Mic size={18} className="mr-[10px] text-[#9a9a9a]" />
        </div>
        <TaskIcons />
        <Tray />
      </div>

      {/* running app underlines */}
      <span className="absolute top-[765px] left-[747px] h-[2px] w-[38px] bg-[#76b9ed]" />
      <span className="absolute top-[765px] left-[795px] h-[2px] w-[39px] bg-[#76b9ed]" />
      <span className="absolute top-[765px] left-[839px] h-[2px] w-[47px] bg-[#76b9ed]" />
      <span className="absolute top-[765px] left-[891px] h-[2px] w-[39px] bg-[#76b9ed]" />

      <SogouBar />
      <SectionDialog />

      {/* red hand-drawn annotation boxes */}
      <div className="absolute top-[227px] left-0 z-30 h-[40px] w-[148px] border-[3px] border-[#f00]" />
      <div className="absolute top-[102px] left-[537px] z-30 h-[456px] w-[186px] border-[3px] border-[#f00]" />
    </div>
  );
}
